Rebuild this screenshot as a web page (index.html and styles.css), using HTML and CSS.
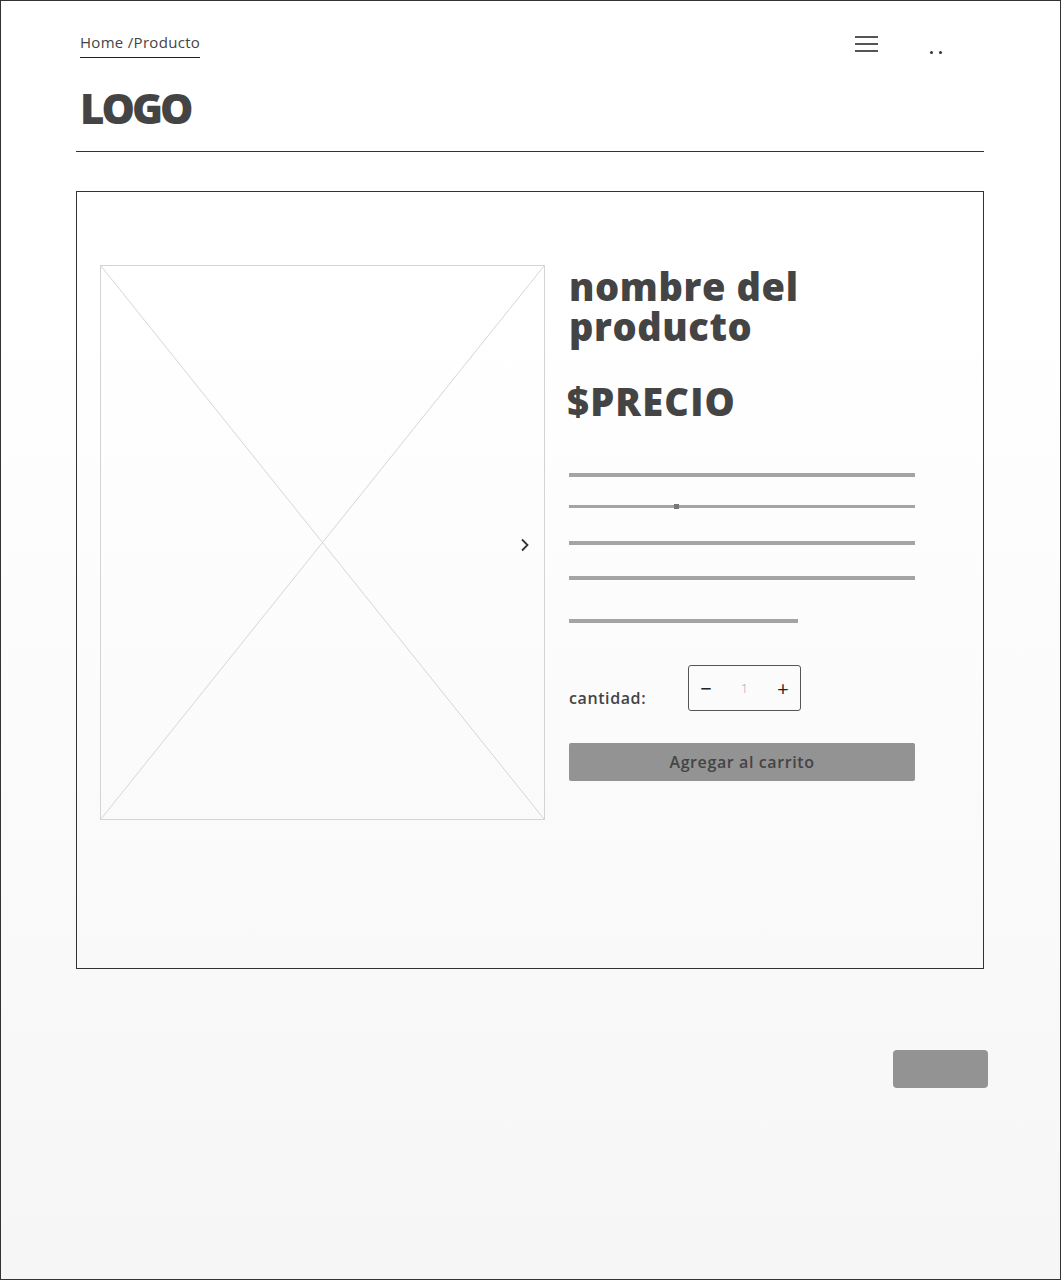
FILE: index.html
```html
<html>
    <head>
        <link rel="stylesheet" href="styles.css">
        <title>Producto</title>
    </head>
    <body>
        <div class="page">
            <header class="top">
                <div class="top-row">
                    <a class="crumbs" href="#">Home /Producto</a>
                    <div class="top-icons">
                        <svg class="burger" width="23" height="18" viewBox="0 0 23 18">
                            <path d="M0 2h23M0 9h23M0 16h23" stroke="#555" stroke-width="2"/>
                        </svg>
                        <span class="dots"><i></i><i></i></span>
                    </div>
                </div>
                <h1 class="logo">LOGO</h1>
            </header>

            <section class="card">
                <div class="gallery">
                    <svg class="placeholder" viewBox="0 0 444 554" preserveAspectRatio="none">
                        <path d="M0 0L444 554M444 0L0 554" stroke="#d6d6d6" stroke-width="1" vector-effect="non-scaling-stroke"/>
                    </svg>
                    <svg class="next" width="10" height="14" viewBox="0 0 10 14">
                        <path d="M2 1.5l5.5 5.5-5.5 5.5" fill="none" stroke="#333" stroke-width="1.8"/>
                    </svg>
                </div>

                <div class="info">
                    <h2 class="name">nombre del producto</h2>
                    <div class="price">$PRECIO</div>

                    <div class="desc">
                        <span class="line l1"></span>
                        <span class="line l2"><b></b></span>
                        <span class="line l3"></span>
                        <span class="line l4"></span>
                        <span class="line short"></span>
                    </div>

                    <div class="qty-row">
                        <span class="qty-label">cantidad:</span>
                        <div class="qty">
                            <button class="qty-btn">&minus;</button>
                            <span class="qty-val">1</span>
                            <button class="qty-btn">+</button>
                        </div>
                    </div>

                    <button class="add">Agregar al carrito</button>
                </div>
            </section>

            <div class="bottom">
                <button class="small-btn"></button>
            </div>
        </div>
    </body>
</html>
```
FILE: styles.css
```css
html, body {
    margin: 0;
    height: 100%;
}

body {
    font-family: 'Open Sans', 'Noto Sans', sans-serif;
    color: #444444;
}

.page {
    box-sizing: border-box;
    height: 1280px;
    border: 1px solid #333333;
    background: linear-gradient(#ffffff 0px, #ffffff 300px, #f6f6f6 1280px);
    padding: 0 76px 0 75px;
}

.top {
    border-bottom: 1px solid #333333;
    padding: 0 0 0 4px;
}

.top-row {
    display: flex;
    justify-content: space-between;
    align-items: flex-start;
    padding-top: 31px;
}

.crumbs {
    font-size: 15px;
    letter-spacing: 0.3px;
    color: #444444;
    text-decoration: none;
    border-bottom: 1px solid #222222;
    padding-bottom: 5px;
    line-height: 20px;
}

.top-icons {
    display: flex;
    align-items: flex-start;
    margin-right: 42px;
    padding-top: 3px;
}

.burger {
    display: block;
}

.dots {
    display: flex;
    gap: 6px;
    margin-left: 52px;
    margin-top: 16px;
}

.dots i {
    width: 3px;
    height: 3px;
    background: #333333;
    border-radius: 50%;
}

.logo {
    margin: 25px 0 18px 0;
    font-size: 42px;
    font-weight: 800;
    line-height: 50px;
    letter-spacing: -3px;
    color: #444444;
}

.card {
    margin-top: 39px;
    height: 778px;
    box-sizing: border-box;
    border: 1px solid #333333;
    display: flex;
    padding: 73px 0 0 23px;
}

.gallery {
    position: relative;
    box-sizing: border-box;
    width: 445px;
    height: 555px;
    border: 1px solid #d4d4d4;
    flex: none;
}

.placeholder {
    display: block;
    width: 100%;
    height: 100%;
}

.next {
    position: absolute;
    right: 14px;
    top: 272px;
}

.info {
    margin-left: 24px;
    width: 346px;
}

.name {
    margin: 1px 0 0 0;
    font-size: 38px;
    font-weight: 800;
    line-height: 40px;
    letter-spacing: 0.6px;
}

.price {
    margin: 33px 0 0 -2px;
    font-size: 38px;
    font-weight: 800;
    line-height: 44px;
    letter-spacing: 1.2px;
}

.desc {
    margin-top: 50px;
}

.line {
    display: block;
    position: relative;
    height: 4px;
    background: #a4a4a4;
}

.l2 { margin-top: 28px; height: 3px; }
.l3 { margin-top: 33px; }
.l4 { margin-top: 31px; }
.short { margin-top: 39px; width: 229px; }

.line b {
    position: absolute;
    left: 105px;
    top: -1px;
    width: 5px;
    height: 5px;
    background: #777777;
}

.qty-row {
    display: flex;
    align-items: center;
    margin-top: 42px;
}

.qty-label {
    font-size: 16px;
    font-weight: 600;
    letter-spacing: 0.6px;
    width: 119px;
    margin-top: 20px;
}

.qty {
    display: flex;
    align-items: center;
    justify-content: space-between;
    box-sizing: border-box;
    width: 113px;
    height: 46px;
    border: 1px solid #555555;
    border-radius: 3px;
    padding: 0 10px;
}

.qty-btn {
    border: none;
    background: none;
    font-family: inherit;
    font-size: 20px;
    color: #222222;
    padding: 0;
    width: 14px;
    cursor: pointer;
}

.qty-val {
    font-size: 13px;
    color: #aaaaaa;
    font-weight: 300;
}

.add {
    display: block;
    width: 100%;
    height: 38px;
    margin-top: 32px;
    border: none;
    border-radius: 2px;
    background-color: #939393;
    font-family: inherit;
    font-size: 16px;
    font-weight: 600;
    letter-spacing: 0.6px;
    color: #444444;
    cursor: pointer;
}

.bottom {
    display: flex;
    justify-content: flex-end;
    margin-right: -4px;
    padding-top: 81px;
}

.small-btn {
    width: 95px;
    height: 38px;
    border: none;
    border-radius: 4px;
    background-color: #939393;
}
```
